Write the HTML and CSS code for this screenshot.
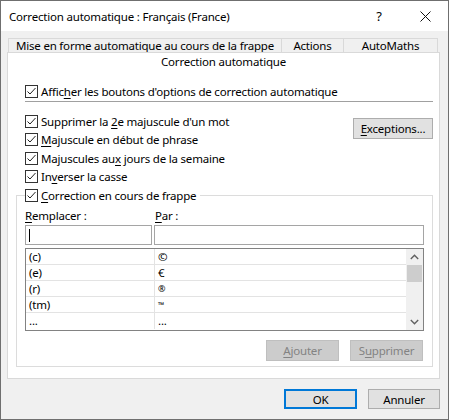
FILE: index.html
```html
<!DOCTYPE html>
<html lang="fr">
<head>
    <meta charset="UTF-8">
    <title>Correction automatique</title>
    <link rel="stylesheet" href="styles.css">
</head>
<body>

<div class="window">
    <div class="titlebar">
        <span class="title">Correction automatique : Français (France)</span>
        <span class="tb-btn">?</span>
        <span class="tb-btn">
            <svg width="11" height="11" viewBox="0 0 11 11"><path d="M0.5 0.5L10.5 10.5M10.5 0.5L0.5 10.5" stroke="#111" stroke-width="1" fill="none"/></svg>
        </span>
    </div>

    <div class="content">
        <div class="tabs">
            <div class="tab tab-format">Mise en forme automatique au cours de la frappe</div>
            <div class="tab tab-actions">Actions</div>
            <div class="tab tab-maths">AutoMaths</div>
        </div>

        <div class="panel">
            <div class="tab-active">Correction automatique</div>

            <div class="top">
                <label class="opt">
                    <span class="cb"><svg width="13" height="13" viewBox="0 0 13 13"><rect x="0.5" y="0.5" width="12" height="12" fill="#fff" stroke="#333"/><path d="M2.5 6.5L5 9L10.5 3" fill="none" stroke="#222"/></svg></span>
                    <span>Affic<u>h</u>er les boutons d'options de correction automatique</span>
                </label>
                <div class="sep"></div>

                <div class="opts-row">
                    <div class="opts">
                        <label class="opt">
                            <span class="cb"><svg width="13" height="13" viewBox="0 0 13 13"><rect x="0.5" y="0.5" width="12" height="12" fill="#fff" stroke="#333"/><path d="M2.5 6.5L5 9L10.5 3" fill="none" stroke="#222"/></svg></span>
                            <span>Supprimer la <u>2</u>e majuscule d'un mot</span>
                        </label>
                        <label class="opt">
                            <span class="cb"><svg width="13" height="13" viewBox="0 0 13 13"><rect x="0.5" y="0.5" width="12" height="12" fill="#fff" stroke="#333"/><path d="M2.5 6.5L5 9L10.5 3" fill="none" stroke="#222"/></svg></span>
                            <span><u>M</u>ajuscule en début de phrase</span>
                        </label>
                        <label class="opt">
                            <span class="cb"><svg width="13" height="13" viewBox="0 0 13 13"><rect x="0.5" y="0.5" width="12" height="12" fill="#fff" stroke="#333"/><path d="M2.5 6.5L5 9L10.5 3" fill="none" stroke="#222"/></svg></span>
                            <span>Majuscules au<u>x</u> jours de la semaine</span>
                        </label>
                        <label class="opt">
                            <span class="cb"><svg width="13" height="13" viewBox="0 0 13 13"><rect x="0.5" y="0.5" width="12" height="12" fill="#fff" stroke="#333"/><path d="M2.5 6.5L5 9L10.5 3" fill="none" stroke="#222"/></svg></span>
                            <span>In<u>v</u>erser la casse</span>
                        </label>
                    </div>
                    <button class="btn btn-exc"><u>E</u>xceptions...</button>
                </div>
            </div>

            <fieldset class="group">
                <legend class="opt legend">
                    <span class="cb"><svg width="13" height="13" viewBox="0 0 13 13"><rect x="0.5" y="0.5" width="12" height="12" fill="#fff" stroke="#333"/><path d="M2.5 6.5L5 9L10.5 3" fill="none" stroke="#222"/></svg></span>
                    <span><u>C</u>orrection en cours de frappe</span>
                </legend>

                <div class="labels">
                    <span class="lbl-left"><u>R</u>emplacer :</span>
                    <span><u>P</u>ar :</span>
                </div>
                <div class="inputs">
                    <div class="field field-left"><span class="caret"></span></div>
                    <div class="field field-right"></div>
                </div>

                <div class="list">
                    <div class="rows">
                        <div class="row"><span class="c1">(c)</span><span class="c2">©</span></div>
                        <div class="row"><span class="c1">(e)</span><span class="c2">€</span></div>
                        <div class="row"><span class="c1">(r)</span><span class="c2 small">®</span></div>
                        <div class="row"><span class="c1">(tm)</span><span class="c2 tm">™</span></div>
                        <div class="row last"><span class="c1">...</span><span class="c2">...</span></div>
                    </div>
                    <div class="scrollbar">
                        <svg class="arrow" width="9" height="6" viewBox="0 0 9 6"><path d="M0.8 5L4.5 1.3L8.2 5" fill="none" stroke="#606060" stroke-width="1.4"/></svg>
                        <div class="thumb"></div>
                        <div class="track"></div>
                        <svg class="arrow" width="9" height="6" viewBox="0 0 9 6"><path d="M0.8 1L4.5 4.7L8.2 1" fill="none" stroke="#606060" stroke-width="1.4"/></svg>
                    </div>
                </div>

                <div class="list-btns">
                    <button class="btn btn-off"><u>A</u>jouter</button>
                    <button class="btn btn-off">S<u>u</u>pprimer</button>
                </div>
            </fieldset>
        </div>

        <div class="footer">
            <button class="btn btn-ok">OK</button>
            <button class="btn btn-cancel">Annuler</button>
        </div>
    </div>
</div>

</body>
</html>
```

FILE: styles.css
```css
body {
    margin: 0;
    font-family: 'Noto Sans', 'Open Sans', sans-serif;
    font-size: 11.5px;
    letter-spacing: -0.2px;
    color: #000;
    background: #f0f0f0;
}
u {
    text-decoration-thickness: 1px;
    text-underline-offset: 2px;
}
.window {
    width: 449px;
    height: 420px;
    box-sizing: border-box;
    border: 1px solid #6f6f6f;
    display: flex;
    flex-direction: column;
    background: #f0f0f0;
}
.titlebar {
    height: 30px;
    background: #fff;
    display: flex;
    align-items: center;
    padding-left: 8px;
}
.title {
    flex: 1;
}
.tb-btn {
    width: 46px;
    height: 30px;
    display: flex;
    align-items: center;
    justify-content: center;
    font-size: 13px;
}
.content {
    flex: 1;
    padding: 7px 8px 0 6px;
    display: flex;
    flex-direction: column;
}
.tabs {
    display: flex;
    height: 14px;
    padding-left: 1px;
}
.tab {
    box-sizing: border-box;
    height: 15px;
    border: 1px solid #d9d9d9;
    border-bottom: none;
    margin-left: -1px;
    text-align: center;
    line-height: 13px;
    white-space: nowrap;
    background: #f0f0f0;
}
.tab:first-child {
    margin-left: 0;
}
.tab-format { width: 274px; }
.tab-actions { width: 63px; }
.tab-maths { width: 95px; }

.panel {
    background: #fff;
    border: 1px solid #d9d9d9;
    padding: 0 6px 11px 8px;
}
.tab-active {
    height: 18px;
    line-height: 18px;
    text-align: center;
    margin-left: -10px;
    margin-right: -8px;
}
.top {
    padding-left: 9px;
    margin-top: 11px;
}
.opt {
    display: flex;
    align-items: center;
    height: 18.5px;
    white-space: nowrap;
}
.top > .opt {
    height: 18px;
}
.cb {
    width: 13px;
    height: 13px;
    margin-right: 3px;
    display: flex;
}
.sep {
    height: 1px;
    background: #a0a0a0;
    margin-top: 1px;
}
.opts-row {
    display: flex;
    margin-top: 10px;
}
.opts {
    flex: 1;
}
.btn {
    font-family: inherit;
    font-size: 11.5px;
    letter-spacing: -0.2px;
    box-sizing: border-box;
    border: 1px solid #adadad;
    background: #e1e1e1;
    color: #000;
    padding: 0;
    height: 21px;
}
.btn-exc {
    width: 80px;
    margin-top: 6px;
}

.group {
    margin: 0;
    min-width: 0;
    border: 1px solid #dcdcdc;
    padding: 0 8px 5px 8px;
}
.legend {
    padding: 0 4px 0 0;
    margin-left: 0;
    height: 18px;
}
.labels {
    display: flex;
    padding-top: 3px;
    line-height: 18px;
}
.lbl-left {
    width: 130px;
}
.inputs {
    display: flex;
    gap: 2px;
}
.field {
    box-sizing: border-box;
    height: 20px;
    border: 1px solid #a5a5a5;
    background: #fff;
    display: flex;
    align-items: center;
}
.field-left {
    width: 127px;
}
.field-right {
    flex: 1;
}
.caret {
    width: 1px;
    height: 13px;
    background: #000;
    margin-left: 3px;
}
.list {
    margin-top: 3px;
    height: 83px;
    box-sizing: border-box;
    border: 1px solid #828282;
    display: flex;
}
.rows {
    flex: 1;
}
.row {
    display: flex;
    height: 16px;
    box-sizing: border-box;
    border-bottom: 1px solid #e3e3e3;
    line-height: 15px;
}
.row.last {
    border-bottom: none;
}
.c1 {
    width: 125px;
    padding-left: 3px;
    border-right: 1px solid #e3e3e3;
}
.c2 {
    padding-left: 3px;
}
.small {
    font-size: 9px;
}
.tm {
    font-size: 8px;
}
.scrollbar {
    width: 17px;
    background: #f0f0f0;
    display: flex;
    flex-direction: column;
    align-items: center;
}
.arrow {
    margin: 5px 0;
}
.thumb {
    width: 15px;
    height: 17px;
    background: #cdcdcd;
}
.track {
    flex: 1;
}
.list-btns {
    display: flex;
    justify-content: flex-end;
    gap: 11px;
    margin-top: 9px;
    padding-right: 1px;
}
.btn-off {
    width: 73px;
    background: #cccccc;
    border-color: #bfbfbf;
    color: #838383;
}
.footer {
    display: flex;
    justify-content: flex-end;
    gap: 11px;
    padding: 10px 0 0 0;
}
.btn-ok, .btn-cancel {
    width: 73px;
    height: 20px;
}
.btn-ok {
    border: 2px solid #0078d7;
}
.btn-cancel {
    width: 72px;
}
```
